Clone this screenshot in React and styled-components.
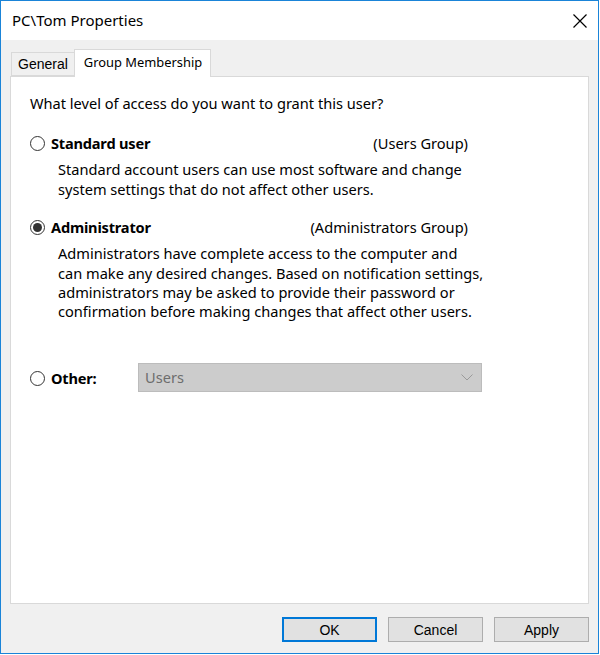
import React from "react";
import styled, { createGlobalStyle } from "styled-components";

const Global = createGlobalStyle`
  html, body {
    margin: 0;
    padding: 0;
    background: #ffffff;
  }
  * {
    box-sizing: border-box;
  }
`;

const Window = styled.div`
  width: 599px;
  height: 654px;
  border: 1px solid #1a84d8;
  display: flex;
  flex-direction: column;
  background: #f0f0f0;
  font-family: "Noto Sans", "Open Sans", sans-serif;
  color: #000;
`;

const TitleBar = styled.div`
  height: 39px;
  background: #ffffff;
  display: flex;
  align-items: center;
  justify-content: space-between;
  padding: 0 11px 0 11px;
`;

const Title = styled.span`
  font-size: 15px;
  color: #000;
  padding-bottom: 2px;
`;

const CloseBtn = styled.div`
  width: 14px;
  height: 14px;
  display: flex;
  margin-top: 1px;
`;

const Body = styled.div`
  flex: 1;
  display: flex;
  flex-direction: column;
  padding: 8px 9px 11px 9px;
`;

const Tabs = styled.div`
  display: flex;
  align-items: flex-end;
  height: 28px;
  padding-left: 1px;
  position: relative;
  z-index: 1;
`;

const Tab = styled.div`
  height: ${(p) => (p.$active ? "28px" : "24px")};
  padding: ${(p) => (p.$active ? "0 8px 4px 9px" : "0 6px 0 6px")};
  margin-bottom: ${(p) => (p.$active ? "-1px" : "0")};
  background: ${(p) => (p.$active ? "#ffffff" : "#f0f0f0")};
  border: 1px solid #d9d9d9;
  border-bottom: ${(p) => (p.$active ? "none" : "1px solid #d9d9d9")};
  border-right: ${(p) => (p.$active ? "1px solid #d9d9d9" : "none")};
  display: flex;
  align-items: center;
  font-family: ${(p) => (p.$active ? '"Noto Sans", sans-serif' : '"Liberation Sans", Arial, sans-serif')};
  font-size: ${(p) => (p.$active ? "12.9px" : "14px")};
`;

const Panel = styled.div`
  width: 579px;
  height: 528px;
  background: #ffffff;
  border: 1px solid #d9d9d9;
  padding: 17px 0 0 19px;
  font-size: 14.6px;
  line-height: 19.4px;
`;

const Question = styled.div`
  margin-bottom: 20px;
`;

const OptionRow = styled.div`
  display: flex;
  align-items: center;
  width: 438px;
  height: 20px;
`;

const Radio = styled.span`
  width: 15px;
  height: 15px;
  border-radius: 50%;
  border: 1px solid #333333;
  display: inline-flex;
  align-items: center;
  justify-content: center;
  flex-shrink: 0;
  margin-right: 6px;
  &::after {
    content: "";
    width: 9px;
    height: 9px;
    border-radius: 50%;
    background: ${(p) => (p.$checked ? "#333333" : "transparent")};
  }
`;

const Label = styled.span`
  font-weight: 700;
  flex: 1;
  letter-spacing: -0.2px;
`;

const GroupName = styled.span`
  margin-left: auto;
`;

const Description = styled.div`
  padding-left: 28px;
  margin-top: 7px;
  margin-bottom: ${(p) => p.$after}px;
`;

const OtherRow = styled.div`
  display: flex;
  align-items: center;
`;

const OtherLabel = styled.span`
  font-weight: 700;
  width: 87px;
  letter-spacing: -0.2px;
`;

const Select = styled.div`
  width: 344px;
  height: 29px;
  margin-top: -2px;
  background: #cccccc;
  border: 1px solid #bcbcbc;
  display: flex;
  align-items: center;
  justify-content: space-between;
  padding: 0 8px 0 6px;
  color: #6d6d6d;
`;

const Footer = styled.div`
  display: flex;
  justify-content: flex-end;
  gap: 11px;
  margin-top: 13px;
`;

const Button = styled.button`
  width: 95px;
  height: 25px;
  background: #e1e1e1;
  border: ${(p) => (p.$default ? "2px solid #0078d7" : "1px solid #adadad")};
  font-family: "Liberation Sans", Arial, sans-serif;
  font-size: 14px;
  color: #000;
  padding: 0;
  margin: 0;
`;

const Option = ({ label, group, checked }) => (
  <OptionRow>
    <Radio $checked={checked} />
    <Label>{label}</Label>
    <GroupName>{group}</GroupName>
  </OptionRow>
);

export default function App() {
  return (
    <>
      <Global />
      <Window>
        <TitleBar>
          <Title>PC\Tom Properties</Title>
          <CloseBtn>
            <svg width="14" height="14" viewBox="0 0 14 14">
              <path d="M0.5 0.5 L13.5 13.5 M13.5 0.5 L0.5 13.5" stroke="#000" strokeWidth="1.2" fill="none" />
            </svg>
          </CloseBtn>
        </TitleBar>
        <Body>
          <Tabs>
            <Tab>General</Tab>
            <Tab $active>Group Membership</Tab>
          </Tabs>
          <Panel>
            <Question>What level of access do you want to grant this user?</Question>
            <Option label="Standard user" group="(Users Group)" />
            <Description $after={18}>
              Standard account users can use most software and change
              <br />
              system settings that do not affect other users.
            </Description>
            <Option label="Administrator" group="(Administrators Group)" checked />
            <Description $after={43}>
              Administrators have complete access to the computer and
              <br />
              can make any desired changes. Based on notification settings,
              <br />
              administrators may be asked to provide their password or
              <br />
              confirmation before making changes that affect other users.
            </Description>
            <OtherRow>
              <Radio />
              <OtherLabel>Other:</OtherLabel>
              <Select>
                <span>Users</span>
                <svg width="12" height="7" viewBox="0 0 12 7">
                  <path d="M0.5 0.5 L6 6 L11.5 0.5" stroke="#9a9a9a" strokeWidth="1" fill="none" />
                </svg>
              </Select>
            </OtherRow>
          </Panel>
          <Footer>
            <Button $default>OK</Button>
            <Button>Cancel</Button>
            <Button>Apply</Button>
          </Footer>
        </Body>
      </Window>
    </>
  );
}
